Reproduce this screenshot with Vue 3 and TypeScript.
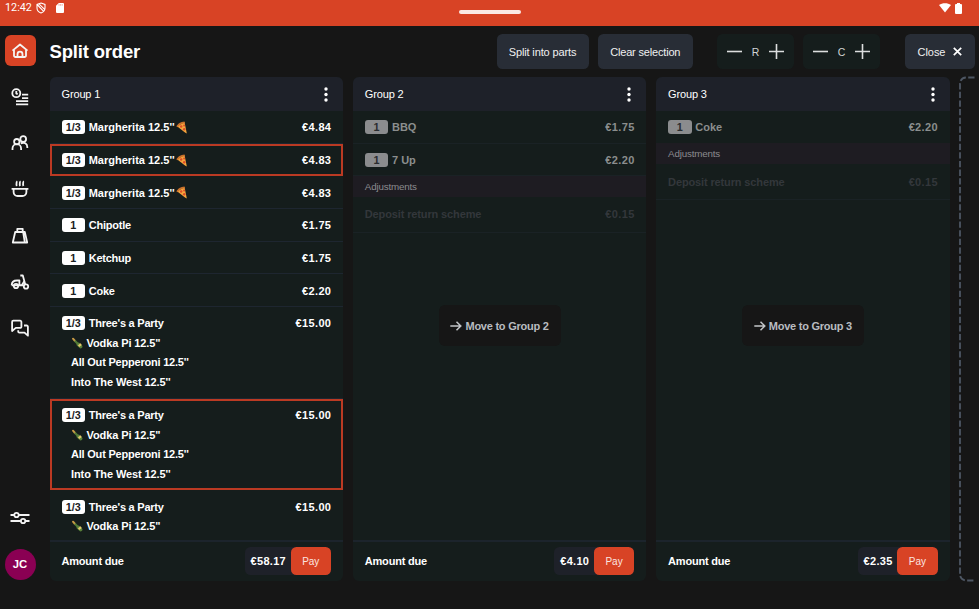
<script setup lang="ts">
interface Item {
  qty: string
  name: string
  price: string
  pizza?: boolean
  selected?: boolean
  parts?: string[]
}
interface Group {
  id: number
  items: Item[]
  deposit?: string
  total: string
}

const partyParts = ['Vodka Pi 12.5"', "All Out Pepperoni 12.5''", "Into The West 12.5''"]

const groups: Group[] = [
  {
    id: 1,
    total: '€58.17',
    items: [
      { qty: '1/3', name: "Margherita 12.5''", price: '€4.84', pizza: true },
      { qty: '1/3', name: "Margherita 12.5''", price: '€4.83', pizza: true, selected: true },
      { qty: '1/3', name: "Margherita 12.5''", price: '€4.83', pizza: true },
      { qty: '1', name: 'Chipotle', price: '€1.75' },
      { qty: '1', name: 'Ketchup', price: '€1.75' },
      { qty: '1', name: 'Coke', price: '€2.20' },
      { qty: '1/3', name: "Three's a Party", price: '€15.00', parts: partyParts },
      { qty: '1/3', name: "Three's a Party", price: '€15.00', parts: partyParts, selected: true },
      { qty: '1/3', name: "Three's a Party", price: '€15.00', parts: partyParts.slice(0, 1) },
    ],
  },
  {
    id: 2,
    total: '€4.10',
    deposit: '€0.15',
    items: [
      { qty: '1', name: 'BBQ', price: '€1.75' },
      { qty: '1', name: '7 Up', price: '€2.20' },
    ],
  },
  {
    id: 3,
    total: '€2.35',
    deposit: '€0.15',
    items: [{ qty: '1', name: 'Coke', price: '€2.20' }],
  },
]
</script>

<template>
  <div class="screen">
    <header class="status">
      <div class="status-left">
        <span class="clock">12:42</span>
        <svg class="shield" width="10" height="12" viewBox="0 0 10 12" fill="none" stroke="#fff" stroke-width="1.1">
          <path d="M5 1 9 2.4V6C9 8.4 7.2 10.2 5 11 2.8 10.2 1 8.4 1 6V2.4ZM1.6 3 7.6 9.4M3.2 2.2 8.6 7.4" />
        </svg>
        <svg class="card" width="8" height="10" viewBox="0 0 8 10">
          <path fill="#fff" d="M2.8 0H7a1 1 0 0 1 1 1v8a1 1 0 0 1-1 1H1a1 1 0 0 1-1-1V2.8Z" />
          <path stroke="#d84325" stroke-width=".5" d="M3 1.2v1.4M4.6 1.2v1.4M6.2 1.2v1.4" />
        </svg>
      </div>
      <div class="handle"></div>
      <div class="status-right">
        <svg width="12" height="10" viewBox="0 0 12 10"><path fill="#fff" d="M0 2C3.4-.5 8.600-.5 12 2L6 9.600Z" /></svg>
        <svg width="7" height="11" viewBox="0 0 7 11"><path fill="#fff" d="M2 0h3v1h1a1 1 0 0 1 1 1v8a1 1 0 0 1-1 1H1a1 1 0 0 1-1-1V2a1 1 0 0 1 1-1h1Z" /></svg>
      </div>
    </header>

    <div class="layout">
      <nav class="side">
        <div class="home">
          <svg viewBox="0 0 18 16" width="18" height="16"><path d="M1.500 7.600 9 1.500l7.500 6.100M3 6.600v5.900a1.500 1.500 0 0 0 1.500 1.500h9a1.500 1.500 0 0 0 1.500-1.500V6.600M6.500 13.800v-2.600a2.500 2.500 0 0 1 5 0v2.600" /></svg>
        </div>
        <div class="nav orders"><svg viewBox="0 0 20 20"><circle cx="6.300" cy="6.200" r="4" /><path d="M6.300 4v2.400l1.400.9M12 7.700h6.200M12 11.200h6.200M6 14.200h12.200M6 17.300h12.200" /></svg></div>
        <div class="nav"><svg viewBox="0 0 20 20"><circle cx="6.800" cy="8.700" r="2.700" /><circle cx="13.200" cy="6" r="2.900" /><path d="M2.500 17v-1.500a4.300 4.300 0 0 1 8.600 0V17M10.700 10.400c3.500-1.800 6.600.4 6.600 3.600v1" /></svg></div>
        <div class="nav"><svg viewBox="0 0 20 20"><path d="M1.600 9.900h16.800M3.600 10v3a4 4 0 0 0 4 4h4.800a4 4 0 0 0 4-4v-3M6.300 2.200c1.200 1-.7 2.300.5 4.800M9.600 2.200c1.200 1-.7 2.300.5 4.800M12.900 2.200c1.200 1-.7 2.300.5 4.800" /></svg></div>
        <div class="nav"><svg viewBox="0 0 20 20"><path d="M5.200 6h9.600l2.400 10.500H2.800ZM7.300 6V2.800h5.400V6M13.200 6.400l1.600 10" /></svg></div>
        <div class="nav"><svg viewBox="0 0 20 20"><path d="M10.300 3.500h2.500l2.500 9.200M1.700 13.300c0-3 1.900-4.800 5.300-4.800h2.400v4.700h2.400l2.300-3.700M1.700 13.300h13" /><circle cx="6" cy="14" r="2.200" /><circle cx="16" cy="14.500" r="2.200" /></svg></div>
        <div class="nav"><svg viewBox="0 0 20 20"><path d="M3.300 2.700h6.900a1.200 1.200 0 0 1 1.200 1.200v4.800a1.200 1.200 0 0 1-1.200 1.200H5.800L2.100 13V3.900a1.200 1.200 0 0 1 1.200-1.200ZM14 7.500h2.700a1.200 1.200 0 0 1 1.200 1.200v9l-3.400-3H9.400a1.200 1.200 0 0 1-1.200-1.200v-1.200" /></svg></div>
        <div class="filters"><svg viewBox="0 0 20 14" width="20" height="14"><path d="M.5 4h3.700M8.800 4h10.700M.5 10h10.300M15.400 10h4.100" /><circle cx="6.500" cy="4" r="2.200" /><circle cx="13.100" cy="10" r="2.200" /></svg></div>
        <div class="avatar">JC</div>
      </nav>

      <main>
        <div class="toolbar">
          <h1>Split order</h1>
          <button class="btn split">Split into parts</button>
          <button class="btn clear">Clear selection</button>
          <div v-for="l in ['R', 'C']" :key="l" class="stepper">
            <svg width="15" height="15" viewBox="0 0 15 15"><path d="M0 7.500h15" /></svg>
            <span>{{ l }}</span>
            <svg width="15" height="15" viewBox="0 0 15 15"><path d="M0 7.500h15M7.500 0v15" /></svg>
          </div>
          <button class="btn close">
            <span>Close</span>
            <svg width="9" height="9" viewBox="0 0 9 9"><path d="m.8.8 7.400 7.400M8.200.8.8 8.200" /></svg>
          </button>
        </div>

        <div class="board">
          <section v-for="g in groups" :key="g.id" class="group" :class="{ muted: g.id > 1 }">
            <div class="group-head">
              <span>Group {{ g.id }}</span>
              <svg width="4" height="15" viewBox="0 0 4 15" fill="#fff"><circle cx="2" cy="2" r="1.700" /><circle cx="2" cy="7.500" r="1.700" /><circle cx="2" cy="13" r="1.700" /></svg>
            </div>
            <div class="group-body">
              <div v-for="(it, i) in g.items" :key="i" class="item" :class="{ selected: it.selected, bundle: it.parts }">
                <div class="line">
                  <span class="qty">{{ it.qty }}</span>
                  <span class="name" :class="{ long: it.pizza }">{{ it.name }}</span>
                  <svg v-if="it.pizza" class="pizza" width="12" height="13" viewBox="0 0 12 13">
                    <path fill="#f6a63c" d="M1 5.200 8.500 1 10.800 12.500 9 11.500Z" />
                    <path fill="#c9712c" d="M.4 5.600C1.500 2.800 4.800.6 8.500.5L9 2.200C6 2.300 3.200 4 1.700 6.300Z" />
                    <circle cx="5.200" cy="5.500" r="1.200" fill="#dc4c29" /><circle cx="8.100" cy="4.500" r="1" fill="#dc4c29" /><circle cx="8.200" cy="8.300" r="1.200" fill="#dc4c29" />
                  </svg>
                  <span class="price">{{ it.price }}</span>
                </div>
                <div v-for="(p, n) in it.parts ?? []" :key="p" class="part" :class="'part-' + n">
                  <svg v-if="n === 0" class="bottle" width="12" height="12" viewBox="0 0 12 12">
                    <path stroke="#c79a45" stroke-width="2" stroke-linecap="round" d="m2 1.700 2 2.300" />
                    <path stroke="#547b35" stroke-width="2.200" d="m3.800 3.800 2.700 2.800" />
                    <path stroke="#588039" stroke-width="3.600" stroke-linecap="round" d="m7.400 7.400 2.200 2.100" />
                    <path stroke="#e3c76c" stroke-width="2.200" d="m7.600 9.200 2.500-2" />
                  </svg>
                  <span>{{ p }}</span>
                </div>
              </div>
              <template v-if="g.deposit">
                <div class="adjust">Adjustments</div>
                <div class="deposit"><span>Deposit return scheme</span><span class="price">{{ g.deposit }}</span></div>
                <div class="overlay">
                  <button class="move">
                    <svg width="12" height="10" viewBox="0 0 12 10"><path d="M.3 5h10.400M6.500.700 10.800 5 6.500 9.300" /></svg>
                    <span>Move to Group {{ g.id }}</span>
                  </button>
                </div>
              </template>
            </div>
            <div class="group-foot">
              <span class="due">Amount due</span>
              <div class="pay-box"><span class="total">{{ g.total }}</span><button class="pay">Pay</button></div>
            </div>
          </section>
          <svg class="next" width="19" height="506" viewBox="0 0 19 506">
            <path d="M15.500 1.500H7a6 6 0 0 0-6 6v491a6 6 0 0 0 6 6h8.500" />
          </svg>
        </div>
      </main>
    </div>
  </div>
</template>

<style>
body {
  background: #161616;
  overflow: hidden;
}
</style>

<style scoped>
.screen {
  width: 979px;
  height: 609px;
  overflow: hidden;
  display: flex;
  flex-direction: column;
  background: #161616;
  color: #fff;
  font-family: 'Liberation Sans', sans-serif;
  font-size: 11px;
}
button {
  border: 0;
  padding: 0;
  font: inherit;
  color: inherit;
}
.status {
  height: 26px;
  flex: none;
  background: #d84325;
  display: grid;
  grid-template-columns: 1fr 62px 1fr;
}
.status-left {
  display: flex;
  align-items: flex-start;
  padding-left: 5px;
}
.clock {
  font-family: Roboto, sans-serif;
  font-size: 10.8px;
  line-height: 16px;
  width: 31px;
}
.shield { margin-top: 2px; }
.card { margin: 3px 0 0 10px; }
.handle {
  height: 4px;
  margin-top: 10px;
  border-radius: 2px;
  background: #fbe9e5;
}
.status-right {
  display: flex;
  justify-content: flex-end;
  gap: 4px;
  padding: 3px 17px 0 0;
}
.layout {
  flex: 1;
  min-height: 0;
  display: flex;
}
.side {
  width: 49.500px;
  flex: none;
  padding: 9px 0 0 4.500px;
  box-sizing: border-box;
  display: flex;
  flex-direction: column;
}
.side svg {
  fill: none;
  stroke: #f4f4f4;
  stroke-width: 1.800;
  stroke-linejoin: round;
}
.home {
  width: 31px;
  height: 31px;
  border-radius: 6px;
  background: #d84325;
  display: grid;
  place-items: center;
  margin-bottom: 7.500px;
}
.nav {
  width: 31px;
  height: 46.300px;
  display: grid;
  place-items: center;
}
.nav svg {
  width: 20px;
  height: 20px;
}
.filters {
  width: 31px;
  margin-top: 160px;
  display: grid;
  place-items: center;
}
.avatar {
  width: 31px;
  height: 31px;
  margin-top: 23.500px;
  border-radius: 50%;
  background: #8a0053;
  display: grid;
  place-items: center;
  font-weight: bold;
  font-size: 11.300px;
}
main {
  flex: 1;
  min-width: 0;
  display: flex;
  flex-direction: column;
}
.toolbar {
  height: 51px;
  display: flex;
  align-items: center;
}
h1 {
  margin: 0 auto 0 0;
  font-size: 18.500px;
  letter-spacing: -0.180px;
}
.btn {
  height: 35px;
  border-radius: 5.500px;
  background: #282d36;
  color: #f0f0f1;
}
.split { width: 92px; margin-right: 9.500px; letter-spacing: -0.130px; }
.clear { width: 94.500px; margin-right: 24.500px; letter-spacing: -0.180px; }
.stepper {
  width: 77px;
  height: 35px;
  box-sizing: border-box;
  padding: 0 10px;
  margin-right: 9px;
  border-radius: 5.500px;
  background: #151d1c;
  color: #d2d4d4;
  display: flex;
  align-items: center;
  justify-content: space-between;
  font-size: 10.500px;
}
.stepper svg { stroke: #dcdede; stroke-width: 1.600; }
.close {
  width: 70.500px;
  margin: 0 4px 0 15.500px;
  display: flex;
  align-items: center;
  justify-content: center;
  gap: 7.500px;
}
.close span { letter-spacing: -0.050px; }
.close svg { stroke: #fff; stroke-width: 1.700; }
.board {
  height: 504px;
  display: flex;
  gap: 9.800px;
}
.group {
  width: 293.500px;
  flex: none;
  border-radius: 6px;
  overflow: hidden;
  background: #151d1c;
  display: flex;
  flex-direction: column;
}
.group-head {
  height: 34px;
  flex: none;
  box-sizing: border-box;
  padding: 0 15px 0 12px;
  background: #1e2129;
  display: flex;
  align-items: center;
  justify-content: space-between;
}
.group-head span { letter-spacing: -0.150px; }
.group-body {
  flex: 1;
  min-height: 0;
  overflow: hidden;
  position: relative;
}
.item {
  box-sizing: border-box;
  min-height: 32.670px;
  padding: 6.500px 12px 5px;
  border-bottom: 1px solid #1e2630;
  font-weight: bold;
}
.bundle { height: 91.700px; }
.selected {
  padding: 5px 10px 4px;
  border: 2px solid #bb3a23;
}
.line {
  display: flex;
  align-items: center;
  height: 19.600px;
}
.selected .line { height: 19.200px; }
.qty {
  width: 23.500px;
  height: 14px;
  line-height: 14.500px;
  border-radius: 3px;
  background: #fff;
  color: #1b2021;
  text-align: center;
  margin-right: 3.700px;
  font-size: 10.800px;
}
.name { letter-spacing: -0.230px; }
.name.long { letter-spacing: 0; }
.muted .name { letter-spacing: 0; }
.pizza { margin-left: 1px; }
.price { margin-left: auto; letter-spacing: 0.350px; margin-right: -0.350px; }
.part {
  height: 19.600px;
  padding-left: 9.500px;
  display: flex;
  align-items: center;
  letter-spacing: -0.100px;
}
.part-1 { letter-spacing: -0.210px; }
.bottle { margin-right: 3.500px; }
.muted .item .qty { background: #8b8c8e; color: #2a2c30; }
.muted .item { color: #8b8e8e; border-color: #1a2225; }
.adjust {
  height: 21px;
  margin-top: -0.500px;
  padding-left: 12px;
  line-height: 21px;
  font-size: 9.800px;
  letter-spacing: -0.180px;
  background: #1e1c22;
  color: #8b8b8f;
}
.deposit {
  height: 35px;
  padding: 0 12px;
  display: flex;
  align-items: center;
  color: #33373b;
  font-weight: bold;
  letter-spacing: -0.130px;
  border-bottom: 1px solid #1a2225;
}
.overlay {
  position: absolute;
  inset: 0;
  display: grid;
  place-items: center;
}
.move {
  width: 122px;
  height: 41px;
  border-radius: 6px;
  background: #161616;
  color: #b9bcc0;
  font-weight: bold;
  letter-spacing: -0.240px;
  display: flex;
  align-items: center;
  justify-content: center;
  gap: 3px;
}
.move svg { fill: none; stroke: #c3c6c9; stroke-width: 1.500; }
.group-foot {
  height: 41px;
  flex: none;
  box-sizing: border-box;
  padding: 0 12px 1px;
  border-top: 2px solid #1c242c;
  display: flex;
  align-items: center;
  justify-content: space-between;
  font-weight: bold;
}
.due { letter-spacing: -0.200px; }
.pay-box {
  height: 28px;
  border-radius: 5.500px;
  background: #1e2129;
  display: flex;
  align-items: center;
}
.total { padding: 0 4.500px 0 6px; letter-spacing: 0.300px; }
.pay {
  width: 40.500px;
  height: 28px;
  border-radius: 5.500px;
  background: #d84325;
  color: #fbe5e0;
  font-size: 10px;
  font-weight: normal;
}
.next { flex: none; margin-top: -1px; }
.next path {
  fill: none;
  stroke: #4d5663;
  stroke-width: 1.800;
  stroke-dasharray: 6.300 2.350;
}
</style>
